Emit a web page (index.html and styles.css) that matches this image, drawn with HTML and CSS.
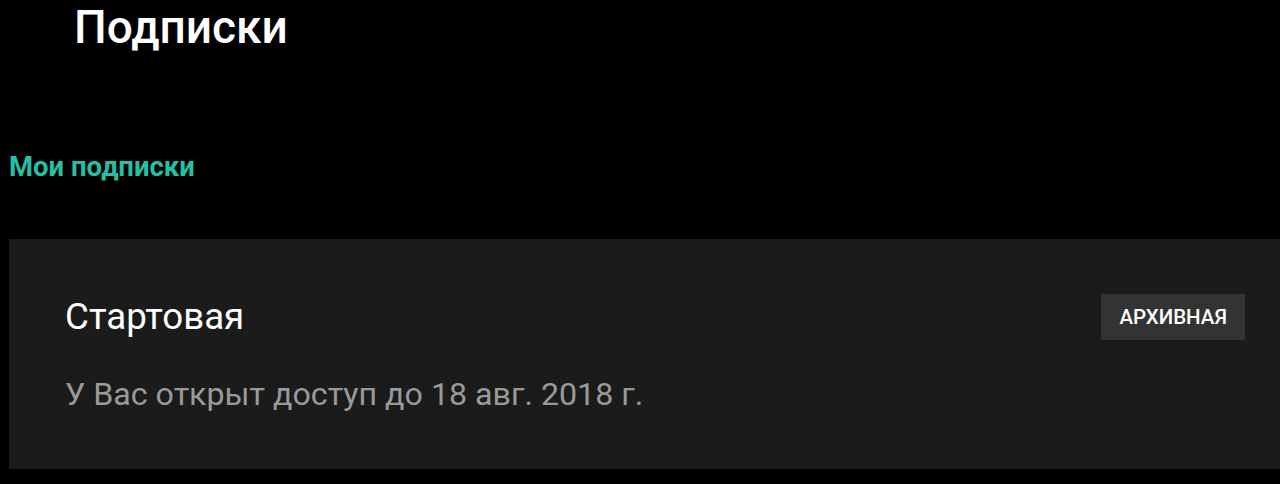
FILE: index.html
```html
<!DOCTYPE html>
<html>
	<head>
		<meta charset="utf-8" />
		<title>Подписки</title>
		<link rel="stylesheet" href="styles.css">
	</head>
	<body>
		<header class="topbar">
			<h1>Подписки</h1>
		</header>
		<main>
			<h2 class="section-title">Мои подписки</h2>
			<section class="card">
				<div class="card-head">
					<div class="plan-name">Стартовая</div>
					<span class="badge">АРХИВНАЯ</span>
				</div>
				<p class="plan-info">У Вас открыт доступ до 18 авг. 2018 г.</p>
			</section>
		</main>
	</body>
</html>
```

FILE: styles.css
```css
html, body {
	margin: 0;
	background: #000;
	font-family: Roboto, 'Noto Sans', sans-serif;
	color: #fff;
}
.topbar {
	padding: 0 0 0 74px;
	height: 120px;
}
.topbar h1 {
	margin: 0;
	padding-top: 3px;
	font-size: 46px;
	font-weight: 500;
	line-height: 48px;
}
main {
	padding-left: 9px;
}
.section-title {
	margin: 0;
	padding-top: 30px;
	height: 89px;
	font-size: 27.5px;
	font-weight: 700;
	line-height: 34px;
	color: #25bfa6;
}
.card {
	background: #1b1b1b;
	height: 230px;
	padding: 55px 35px 0 56px;
	box-sizing: border-box;
}
.card-head {
	display: flex;
	justify-content: space-between;
	align-items: center;
}
.plan-name {
	font-size: 36.7px;
	line-height: 46px;
}
.badge {
	background: #333;
	padding: 0 18px;
	height: 46px;
	line-height: 46px;
	font-size: 20.5px;
	font-weight: 500;
}
.plan-info {
	margin: 34px 0 0;
	font-size: 32.2px;
	line-height: 40px;
	color: #9a9a9a;
}
```
